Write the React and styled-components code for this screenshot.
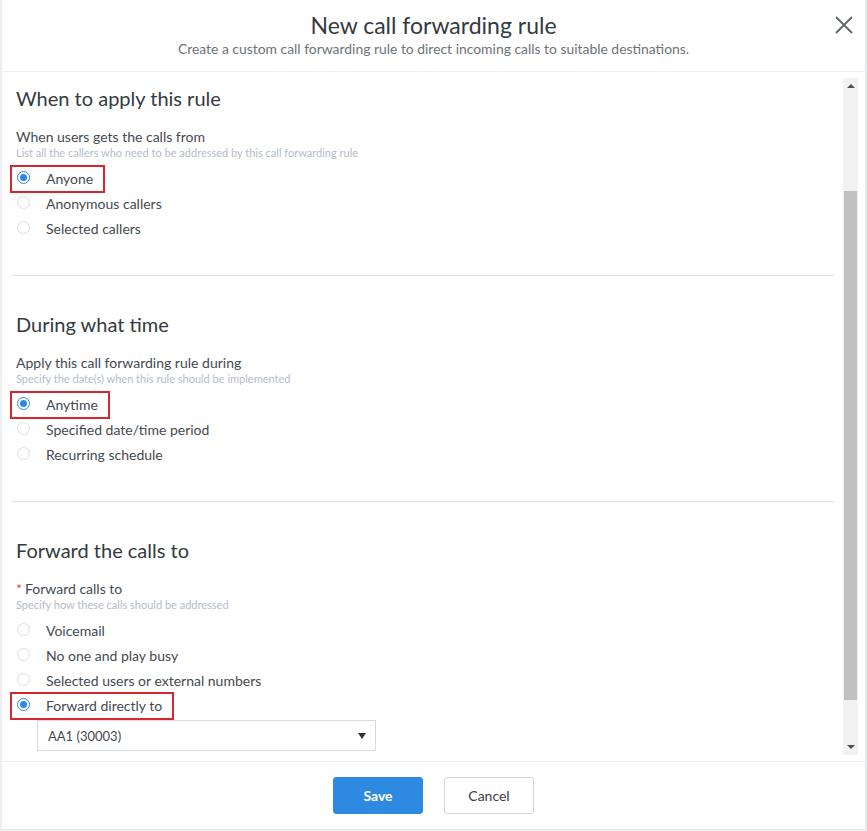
import React from "react";
import styled, { createGlobalStyle } from "styled-components";

const GlobalStyle = createGlobalStyle`
  body {
    margin: 0;
    background: #eceef1;
    font-family: Lato, "Open Sans", sans-serif;
  }
`;

const Page = styled.div`
  padding-left: 2px;
  height: 831px;
`;

const Modal = styled.div`
  width: 863px;
  height: 829px;
  background: #fff;
  border-right: 1px solid #e6e8eb;
  border-bottom: 1px solid #e6e8eb;
  display: flex;
  flex-direction: column;
`;

const Header = styled.div`
  height: 72px;
  flex-shrink: 0;
  border-bottom: 1px solid #eef0f2;
  display: flex;
  flex-direction: column;
  align-items: center;
  padding-top: 11px;
  box-sizing: border-box;
  position: relative;
`;

const Title = styled.h1`
  margin: 0;
  font-size: 23px;
  line-height: 29px;
  font-weight: 400;
  color: #343a40;
`;

const Subtitle = styled.div`
  font-size: 13.9px;
  line-height: 18px;
  color: #6c7378;
`;

const Close = styled.button`
  position: absolute;
  right: 10px;
  top: 14px;
  width: 22px;
  height: 22px;
  padding: 0;
  border: none;
  background: none;
`;

const Body = styled.div`
  flex: 1;
  display: flex;
  min-height: 0;
`;

const Content = styled.div`
  flex: 1;
  overflow: hidden;
  padding: 0 0 0 10px;
`;

const Section = styled.section`
  padding: ${(p) => (p.$first ? "13px" : "35px")} 0 ${(p) => (p.$last ? "0" : "34px")} 4px;
  border-bottom: ${(p) => (p.$last ? "none" : "1px solid #dfe2e6")};
  margin-right: 4px;
`;

const Heading = styled.h2`
  margin: 0 0 17px;
  font-size: 20px;
  line-height: 26px;
  font-weight: 400;
  color: #343a40;
`;

const Label = styled.div`
  font-size: 14px;
  line-height: 18px;
  color: #444a50;
  span {
    color: #e0454c;
    margin-right: 3px;
  }
`;

const Hint = styled.div`
  font-size: 11px;
  line-height: 14px;
  color: #b4bccb;
  margin-bottom: 6px;
`;

const Options = styled.div`
  display: flex;
  flex-direction: column;
  align-items: flex-start;
`;

const Option = styled.label`
  position: relative;
  display: inline-flex;
  align-items: center;
  height: 25px;
  padding-left: 1px;
  font-size: 14px;
  color: #444a50;
  &::after {
    content: "";
    display: ${(p) => (p.$highlight ? "block" : "none")};
    position: absolute;
    left: -6px;
    right: -12px;
    top: -1px;
    bottom: -2px;
    border: 2px solid #d9252f;
  }
`;

const Circle = styled.span`
  width: 13px;
  height: 13px;
  border-radius: 50%;
  box-sizing: border-box;
  border: 1px solid ${(p) => (p.$checked ? "#2d8ae0" : "#d9dde3")};
  margin-right: 16px;
  margin-top: -3px;
  display: flex;
  align-items: center;
  justify-content: center;
  &::before {
    content: "";
    width: 7px;
    height: 7px;
    border-radius: 50%;
    background: #2d8ae0;
    display: ${(p) => (p.$checked ? "block" : "none")};
  }
`;

const Select = styled.div`
  margin: 2px 0 0 21px;
  width: 339px;
  height: 31px;
  box-sizing: border-box;
  border: 1px solid #d6dade;
  display: flex;
  align-items: center;
  justify-content: space-between;
  padding: 0 9px 0 10px;
  font-size: 13px;
  color: #444a50;
`;

const Caret = styled.span`
  width: 0;
  height: 0;
  border-left: 4.5px solid transparent;
  border-right: 4.5px solid transparent;
  border-top: 6px solid #333;
`;

const Scrollbar = styled.div`
  width: 15px;
  margin: 6px 7px 6px 5px;
  background: #f1f1f1;
  display: flex;
  flex-direction: column;
  align-items: center;
`;

const Arrow = styled.span`
  width: 0;
  height: 0;
  margin: ${(p) => (p.$up ? "6px 0 0" : "0 0 6px")};
  border-left: 4px solid transparent;
  border-right: 4px solid transparent;
  ${(p) => (p.$up ? "border-bottom: 4px solid #505050;" : "border-top: 4px solid #505050;")}
`;

const Track = styled.div`
  flex: 1;
  width: 100%;
  display: flex;
  flex-direction: column;
  padding: 103px 1px 45px;
  box-sizing: border-box;
`;

const Thumb = styled.div`
  flex: 1;
  background: #c1c1c1;
`;

const Footer = styled.div`
  height: 66px;
  flex-shrink: 0;
  border-top: 1px solid #eef0f2;
  display: flex;
  justify-content: center;
  align-items: center;
  gap: 21px;
  padding-bottom: 1px;
`;

const Button = styled.button`
  width: 90px;
  height: 37px;
  border-radius: 3px;
  font-family: Lato, "Open Sans", sans-serif;
  font-size: 14px;
  font-weight: ${(p) => (p.$primary ? 700 : 400)};
  color: ${(p) => (p.$primary ? "#fff" : "#3a4046")};
  background: ${(p) => (p.$primary ? "#2d8ae0" : "#fff")};
  border: 1px solid ${(p) => (p.$primary ? "#2d8ae0" : "#d3d6da")};
`;

const Radio = ({ children, checked, highlight }) => (
  <Option $highlight={highlight}>
    <Circle $checked={checked} />
    {children}
  </Option>
);

export default function App() {
  return (
    <Page>
      <GlobalStyle />
      <Modal>
        <Header>
          <Title>New call forwarding rule</Title>
          <Subtitle>
            Create a custom call forwarding rule to direct incoming calls to suitable destinations.
          </Subtitle>
          <Close aria-label="Close">
            <svg width="22" height="22" viewBox="0 0 22 22">
              <path d="M3 3 L19 19 M19 3 L3 19" stroke="#5f6469" strokeWidth="1.8" fill="none" />
            </svg>
          </Close>
        </Header>
        <Body>
          <Content>
            <Section $first>
              <Heading>When to apply this rule</Heading>
              <Label>When users gets the calls from</Label>
              <Hint>List all the callers who need to be addressed by this call forwarding rule</Hint>
              <Options>
                <Radio checked highlight>Anyone</Radio>
                <Radio>Anonymous callers</Radio>
                <Radio>Selected callers</Radio>
              </Options>
            </Section>
            <Section>
              <Heading>During what time</Heading>
              <Label>Apply this call forwarding rule during</Label>
              <Hint>Specify the date(s) when this rule should be implemented</Hint>
              <Options>
                <Radio checked highlight>Anytime</Radio>
                <Radio>Specified date/time period</Radio>
                <Radio>Recurring schedule</Radio>
              </Options>
            </Section>
            <Section $last>
              <Heading>Forward the calls to</Heading>
              <Label>
                <span>*</span>Forward calls to
              </Label>
              <Hint>Specify how these calls should be addressed</Hint>
              <Options>
                <Radio>Voicemail</Radio>
                <Radio>No one and play busy</Radio>
                <Radio>Selected users or external numbers</Radio>
                <Radio checked highlight>Forward directly to</Radio>
              </Options>
              <Select>
                AA1 (30003)
                <Caret />
              </Select>
            </Section>
          </Content>
          <Scrollbar>
            <Arrow $up />
            <Track>
              <Thumb />
            </Track>
            <Arrow />
          </Scrollbar>
        </Body>
        <Footer>
          <Button $primary>Save</Button>
          <Button>Cancel</Button>
        </Footer>
      </Modal>
    </Page>
  );
}
